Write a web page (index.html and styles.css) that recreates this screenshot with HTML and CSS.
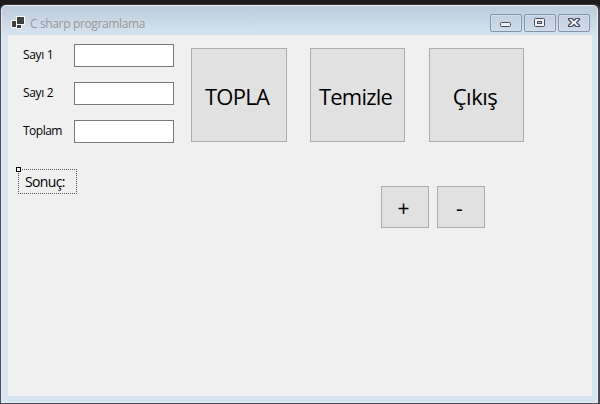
FILE: index.html
```html
<!DOCTYPE html>
<html lang="tr">
<head>
<meta charset="utf-8">
<title>C sharp programlama</title>
<link rel="stylesheet" href="styles.css">
</head>
<body>
<div class="window">
  <header class="titlebar">
    <svg class="app-icon" width="14" height="13" viewBox="0 0 14 13" shape-rendering="crispEdges">
      <path fill="#f8fafc" d="M5 0h9v9h-3v4H5v-1H0V4h5z"/>
      <path fill="#404040" d="M6 1h7v7H6zM1 5h4v6H1zM6 9h4v3H6z"/>
    </svg>
    <span class="title">C sharp programlama</span>
    <div class="controls">
      <span class="control"><svg width="30" height="16" viewBox="0 0 30 16"><rect x="9.5" y="7.5" width="10" height="4" rx="1" fill="#f0f0f0" stroke="#484c60"/></svg></span>
      <span class="control"><svg width="30" height="16" viewBox="0 0 30 16"><rect x="9.5" y="3.5" width="10" height="8" rx="1" fill="#f0f0f0" stroke="#484c60"/><rect x="12.5" y="6.5" width="4" height="2" fill="#b9c9dc" stroke="#484c60"/></svg></span>
      <span class="control"><svg width="30" height="16" viewBox="0 0 30 16"><path d="M9.5 3.5h3.500l2 2 2-2h3.500v1L17.500 7.500l3 3v1H17l-2-2-2 2H9.500v-1l3-3-3-3z" fill="#f4f4f4" stroke="#484c60" stroke-width="1.2" stroke-linejoin="round"/></svg></span>
    </div>
  </header>
  <main class="client">
    <div class="top">
      <div class="form">
        <label class="s1" for="a">Sayı 1</label><input id="a" type="text">
        <label class="s1" for="b">Sayı 2</label><input id="b" type="text">
        <label for="c">Toplam</label><input id="c" type="text">
      </div>
      <div class="actions">
        <button class="topla"><span>TOPLA</span></button>
        <button class="temizle"><span>Temizle</span></button>
        <button class="cikis"><span>Çıkış</span></button>
      </div>
    </div>
    <div class="bottom">
      <div class="result"><span class="handle"></span><span>Sonuç:</span></div>
      <div class="ops">
        <button><span>+</span></button>
        <button><span>-</span></button>
      </div>
    </div>
  </main>
</div>
</body>
</html>
```
FILE: styles.css
```css
* { box-sizing: border-box; }

body {
  margin: 0;
  height: 404px;
  padding-top: 4px;
  overflow: hidden;
  background: #1e1b1c;
  font-family: "Open Sans", "Noto Sans", sans-serif;
  color: #000;
}

.window {
  width: 599px;
  height: 400px;
  padding: 0 6px 6px;
  border: 1px solid #4c4a50;
  border-top-color: #333;
  border-radius: 6px 6px 0 0;
  box-shadow: inset 0 0 0 1px #e6eef7, 1px 0 0 #4c4a50;
  background: linear-gradient(#bccad9, #d7e4f1 31px, #d7e4f1);
}

.titlebar {
  display: flex;
  height: 30px;
  padding: 0 2px 0 4px;
}

.app-icon { margin: 11px 5px 0 0; }

.title {
  margin-top: 10px;
  font-size: 12px;
  line-height: 17px;
  letter-spacing: -0.36px;
  white-space: nowrap;
  color: #999;
}

.controls {
  display: flex;
  gap: 2px;
  margin: 9px 0 0 auto;
}

.control {
  width: 32px;
  height: 18px;
  border: 1px solid #8491ad;
  border-radius: 2px;
  background: linear-gradient(#c2cfde, #cedbe9);
  box-shadow: inset 0 0 0 1px #d4dfec;
}

.control svg { display: block; }

.client {
  width: 584px;
  height: 361px;
  margin-left: 1px;
  background: #f0f0f0;
}

.top {
  display: flex;
  height: 134px;
}

.form {
  display: grid;
  grid-template-columns: 51px 100px;
  grid-auto-rows: 23px;
  row-gap: 15px;
  margin: 9px 17px 0 15px;
}

.form label {
  font-size: 12px;
  line-height: 22px;
  letter-spacing: -0.5px;
  white-space: nowrap;
}

.form .s1 { letter-spacing: -0.35px; }

.form input {
  width: 100px;
  height: 23px;
  padding: 2px;
  border: 1px solid #7a7a7a;
  border-radius: 0;
  background: #fff;
}

button {
  padding: 0;
  border: 1px solid #adadad;
  border-radius: 0;
  background: #e1e1e1;
  font-family: inherit;
  color: #000;
}

.actions {
  display: flex;
  margin-top: 13px;
}

.actions button {
  width: 95px;
  height: 94px;
  font-size: 22px;
  line-height: 30px;
  padding-top: 1px;
  margin-right: 24px;
  white-space: nowrap;
}

.actions .topla {
  width: 96px;
  margin-right: 23px;
  padding-right: 4px;
  letter-spacing: -0.75px;
}

.actions .temizle { padding-right: 4px; letter-spacing: -0.8px; }
.actions .cikis { padding-right: 3px; letter-spacing: -0.5px; }

.bottom {
  display: flex;
}

.result {
  position: relative;
  width: 59px;
  height: 25px;
  margin-left: 10px;
  padding-left: 6px;
  border: 1px dotted #555;
  font-size: 14px;
  line-height: 24px;
  letter-spacing: -0.65px;
}

.handle {
  position: absolute;
  left: -3px;
  top: -3px;
  width: 5px;
  height: 5px;
  border: 1px solid #000;
  background: #fff;
}

.ops {
  display: flex;
  gap: 8px;
  margin: 17px 0 0 304px;
}

.ops button {
  width: 48px;
  height: 42px;
  padding: 1px 3px 0 0;
  font-size: 21px;
  line-height: 28px;
}
```
